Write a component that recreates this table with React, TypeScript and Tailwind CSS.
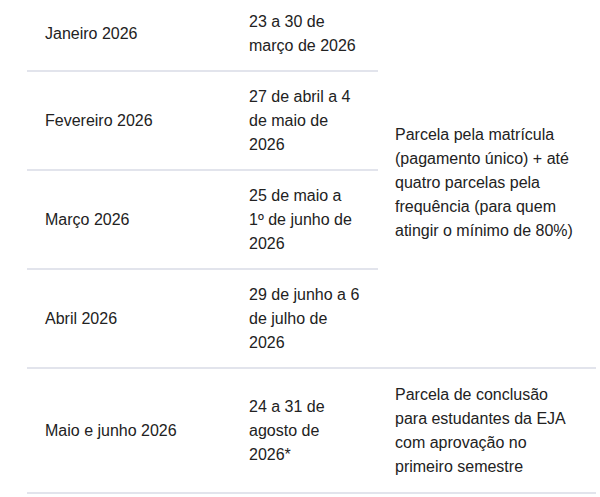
const rows = [
  { month: "Janeiro 2026", dates: "23 a 30 de março de 2026" },
  { month: "Fevereiro 2026", dates: "27 de abril a 4 de maio de 2026" },
  { month: "Março 2026", dates: "25 de maio a 1º de junho de 2026" },
  { month: "Abril 2026", dates: "29 de junho a 6 de julho de 2026" },
];

const cell = "border-b-2 border-[#e2e4ec] px-[18px] pt-[13px] pb-[12px] align-middle";
const lastCell = "border-b-2 border-[#e2e4ec] px-[18px] pt-[14px] pb-[13px] align-middle";

export default function App() {
  return (
    <div
      className="w-[600px] h-[497px] overflow-hidden bg-white text-[16px] leading-[24px] text-[#222]"
      style={{ fontFamily: '"Liberation Sans", Arial, sans-serif' }}
    >
      <table className="ml-[27px] -mt-[3px] w-[569px] table-fixed border-collapse">
        <colgroup>
          <col className="w-[204px]" />
          <col className="w-[147px]" />
          <col className="w-[218px]" />
        </colgroup>
        <tbody>
          {rows.map((r, i) => (
            <tr key={r.month}>
              <td className={cell}>{r.month}</td>
              <td className={cell}>{r.dates}</td>
              {i === 0 && (
                <td rowSpan={4} className={`${cell} pl-[17px] pr-[14px]`}>
                  Parcela pela matrícula (pagamento único) + até quatro parcelas pela frequência (para quem atingir o mínimo de 80%)
                </td>
              )}
            </tr>
          ))}
          <tr>
            <td className={lastCell}>Maio e junho 2026</td>
            <td className={lastCell}>24 a 31 de agosto de 2026*</td>
            <td className={`${lastCell} pl-[17px] pr-[14px]`}>
              Parcela de conclusão para estudantes da EJA com aprovação no primeiro semestre
            </td>
          </tr>
        </tbody>
      </table>
    </div>
  );
}
